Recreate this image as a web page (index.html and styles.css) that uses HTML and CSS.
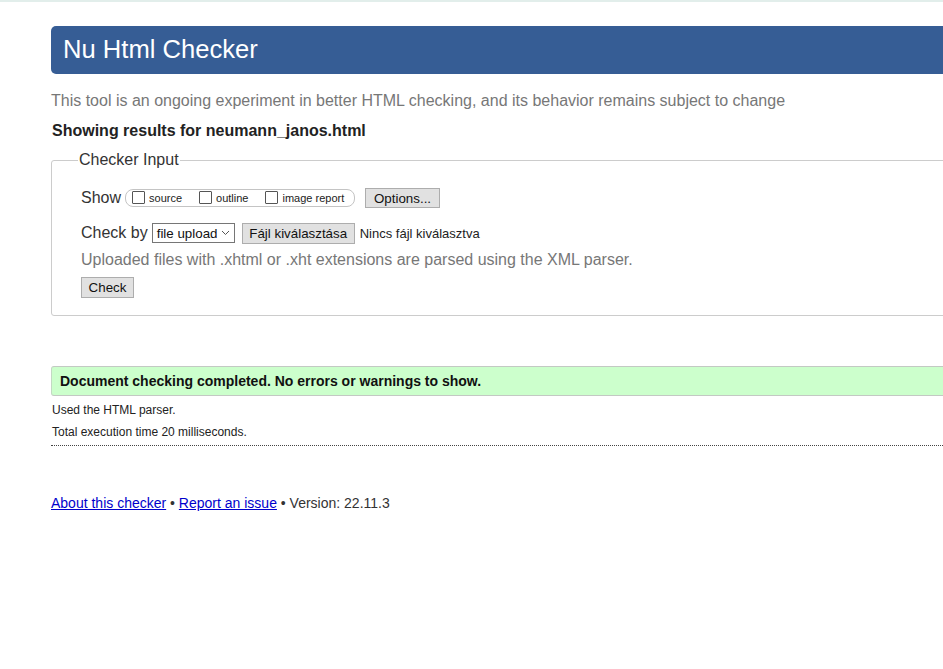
FILE: index.html
```html
<!DOCTYPE html>
<html lang="hu">
<head>
<meta charset="utf-8">
<title>Nu Html Checker</title>
<link rel="stylesheet" href="styles.css">
</head>
<body>
<div class="page">
  <h1 class="title">Nu Html Checker</h1>
  <p class="intro">This tool is an ongoing experiment in better HTML checking, and its behavior remains subject to change</p>
  <p class="showing">Showing results for neumann_janos.html</p>
  <fieldset class="input">
    <legend class="legend">Checker Input</legend>
    <div class="row show-row">
      <span class="label">Show</span>
      <span class="group">
        <span class="opt"><span class="cb"></span>source</span>
        <span class="opt"><span class="cb"></span>outline</span>
        <span class="opt"><span class="cb"></span>image report</span>
      </span>
      <span class="btn options">Options...</span>
    </div>
    <div class="row check-row">
      <span class="label">Check by</span>
      <span class="select">file upload<svg class="chev" width="9" height="6" viewBox="0 0 9 6"><path d="M1 1 L4.5 4.5 L8 1" fill="none" stroke="#555" stroke-width="1"/></svg></span>
      <span class="btn file">Fájl kiválasztása</span>
      <span class="nofile">Nincs fájl kiválasztva</span>
    </div>
    <p class="note">Uploaded files with .xhtml or .xht extensions are parsed using the XML parser.</p>
    <span class="btn check">Check</span>
  </fieldset>
  <p class="success">Document checking completed. No errors or warnings to show.</p>
  <p class="meta">Used the HTML parser.</p>
  <p class="meta">Total execution time 20 milliseconds.</p>
  <hr class="sep">
  <p class="footer"><a href="#">About this checker</a> • <a href="#">Report an issue</a> • Version: 22.11.3</p>
</div>
</body>
</html>
```
FILE: styles.css
```css
html {
  border-top: 2px solid #e2eeeb;
  background: #fff;
}
body {
  margin: 0;
  overflow: hidden;
  font-family: "Liberation Sans", Arial, sans-serif;
  color: #222;
}
.page {
  margin-left: 51px;
  margin-right: -20px;
  padding-top: 24px;
}
.title {
  margin: 0;
  height: 48px;
  line-height: 46px;
  background: #365d95;
  color: #fff;
  font-size: 25.6px;
  font-weight: normal;
  padding-left: 12px;
  border-radius: 5px 0 0 5px;
}
.intro {
  margin: 17px 0 0;
  line-height: 20px;
  font-size: 16px;
  color: #777;
}
.showing {
  margin: 10px 0 0 1px;
  line-height: 20px;
  font-size: 16px;
  font-weight: bold;
  color: #222;
}
.input {
  margin: 10px 0 0;
  padding: 18px 29px 17px;
  border: 1px solid #ccc;
  border-radius: 3px 0 0 3px;
}
.legend {
  padding: 0 1px;
  margin-left: -3px;
  font-size: 16px;
  color: #333;
}
.row {
  display: flex;
  align-items: center;
}
.label {
  font-size: 16px;
  color: #333;
}
.show-row {
  height: 22px;
}
.group {
  display: flex;
  align-items: center;
  margin-left: 4px;
  height: 16px;
  padding: 0 6px 0 6px;
  border: 1px solid #c4c4c4;
  border-radius: 8px;
  width: 216px;
  box-sizing: content-box;
}
.opt {
  display: flex;
  align-items: center;
  font-size: 11px;
  color: #222;
  margin-right: 17px;
}
.opt:last-child {
  margin-right: 0;
}
.cb {
  width: 11px;
  height: 11px;
  border: 1px solid #555;
  border-radius: 1px;
  margin-right: 4px;
  margin-top: -2px;
  background: #fff;
}
.btn {
  display: inline-flex;
  align-items: center;
  justify-content: center;
  box-sizing: border-box;
  background: #e1e1e1;
  border: 1px solid #adadad;
  font-size: 13.33px;
  color: #111;
  height: 20px;
}
.options {
  margin-left: 10px;
  width: 75px;
}
.check-row {
  margin-top: 13px;
  height: 22px;
}
.select {
  display: inline-flex;
  align-items: center;
  box-sizing: border-box;
  margin-left: 4px;
  width: 83px;
  height: 20px;
  padding-left: 4px;
  border: 1px solid #767676;
  font-size: 13.33px;
  color: #111;
  background: #fff;
}
.chev {
  margin-left: 4px;
}
.file {
  margin-left: 7px;
  width: 113px;
  height: 21px;
}
.nofile {
  margin-left: 5px;
  font-size: 13px;
  color: #222;
}
.note {
  margin: 6px 0 0;
  line-height: 20px;
  font-size: 16px;
  color: #777;
}
.check {
  margin-top: 7px;
  width: 53px;
  height: 21px;
}
.success {
  margin: 50px 0 0;
  height: 28px;
  line-height: 28px;
  padding-left: 8px;
  background: #ccffcc;
  border-top: 1px solid #c3c9c3;
  border-bottom: 1px solid #c3c9c3;
  border-left: 1px solid #c3d9c3;
  border-radius: 3px 0 0 3px;
  font-size: 14px;
  font-weight: bold;
  color: #111;
}
.meta {
  margin: 6px 0 0 1px;
  font-size: 12px;
  line-height: 16px;
  color: #222;
}
.sep {
  margin: 5px 0 0;
  border: 0;
  border-top: 1px dotted #444;
  height: 0;
}
.footer {
  margin: 48px 0 0;
  font-size: 14px;
  line-height: 18px;
  color: #333;
}
.footer a {
  color: #00c;
}
```
